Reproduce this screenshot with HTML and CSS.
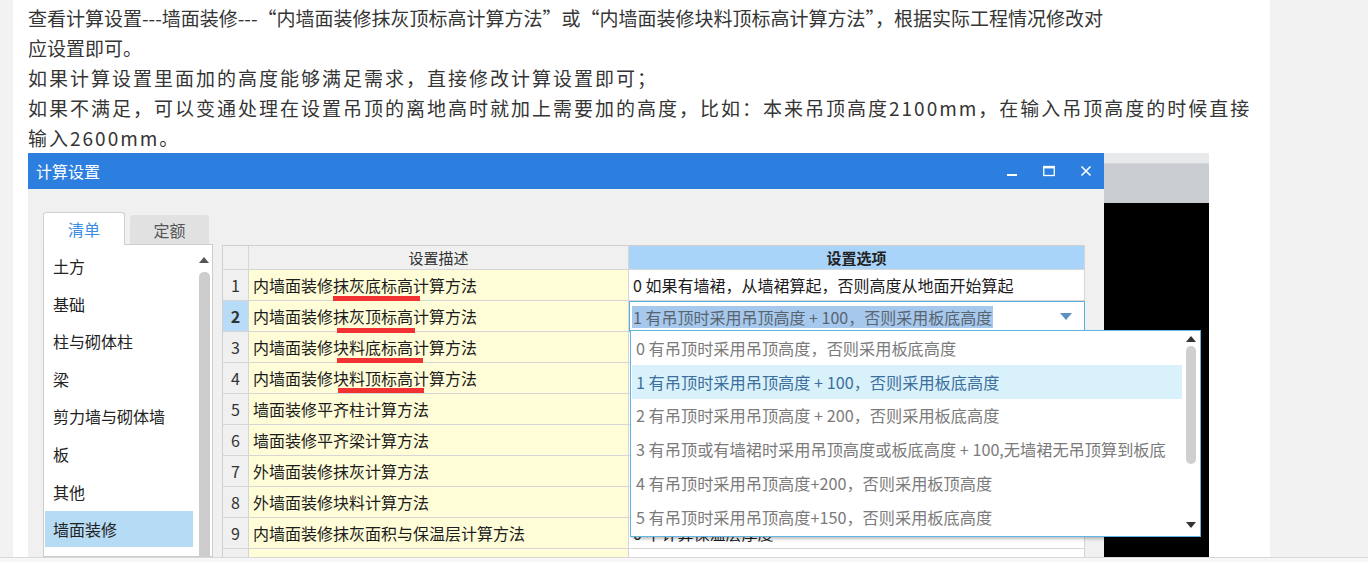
FILE: index.html
```html
<!DOCTYPE html>
<html lang="zh-CN">
<head>
<meta charset="utf-8">
<title>计算设置</title>
<link rel="stylesheet" href="styles.css">
</head>
<body>
<div class="page">
  <div class="article">
    <p class="line">查看计算设置---墙面装修---“内墙面装修抹灰顶标高计算方法”或“内墙面装修块料顶标高计算方法”，根据实际工程情况修改对</p>
    <p class="line">应设置即可。</p>
    <p class="line wide">如果计算设置里面加的高度能够满足需求，直接修改计算设置即可；</p>
    <p class="line wide">如果不满足，可以变通处理在设置吊顶的离地高时就加上需要加的高度，比如：本来吊顶高度2100mm，在输入吊顶高度的时候直接</p>
    <p class="line wide">输入2600mm。</p>

    <div class="figure">
      <div class="dialog">
        <div class="titlebar">
          <span class="title">计算设置</span>
          <div class="controls">
            <span class="ctl"><svg width="12" height="12" viewBox="0 0 12 12"><rect x="1" y="9" width="10" height="2" fill="#fff"/></svg></span>
            <span class="ctl"><svg width="12" height="12" viewBox="0 0 12 12"><rect x="0.75" y="1.5" width="10.5" height="9" fill="none" stroke="#fff" stroke-width="1.3"/><rect x="0.5" y="1" width="11" height="2.4" fill="#fff"/></svg></span>
            <span class="ctl"><svg width="12" height="12" viewBox="0 0 12 12"><path d="M1.5 1.5 L10.5 10.5 M10.5 1.5 L1.5 10.5" stroke="#fff" stroke-width="1.6"/></svg></span>
          </div>
        </div>
        <div class="dlg-body">
          <div class="tabs">
            <div class="tab active">清单</div>
            <div class="tab">定额</div>
          </div>
          <div class="content">
            <div class="catlist">
              <div class="cat-items">
                <div class="cat">土方</div>
                <div class="cat">基础</div>
                <div class="cat">柱与砌体柱</div>
                <div class="cat">梁</div>
                <div class="cat">剪力墙与砌体墙</div>
                <div class="cat">板</div>
                <div class="cat">其他</div>
                <div class="cat sel">墙面装修</div>
              </div>
              <div class="vbar">
                <svg class="arrow-up" width="10" height="6" viewBox="0 0 10 6"><path d="M0 6 L5 0 L10 6 Z" fill="#555"/></svg>
                <div class="thumb"></div>
              </div>
            </div>

            <div class="grid-wrap">
              <div class="grid">
                <div class="h num"></div>
                <div class="h desc">设置描述</div>
                <div class="h opt">设置选项</div>

                <div class="num">1</div>
                <div class="desc">内墙面装修抹灰底标高计算方法</div>
                <div class="opt">0 如果有墙裙，从墙裙算起，否则高度从地面开始算起</div>

                <div class="num cur">2</div>
                <div class="desc">内墙面装修抹灰顶标高计算方法</div>
                <div class="opt editor"><span class="selected-text">1 有吊顶时采用吊顶高度 + 100，否则采用板底高度</span><svg class="caret" width="12" height="7" viewBox="0 0 12 7"><path d="M0 0 L12 0 L6 7 Z" fill="#5d8fc2"/></svg></div>

                <div class="num">3</div>
                <div class="desc">内墙面装修块料底标高计算方法</div>
                <div class="opt"></div>

                <div class="num">4</div>
                <div class="desc">内墙面装修块料顶标高计算方法</div>
                <div class="opt"></div>

                <div class="num">5</div>
                <div class="desc">墙面装修平齐柱计算方法</div>
                <div class="opt"></div>

                <div class="num">6</div>
                <div class="desc">墙面装修平齐梁计算方法</div>
                <div class="opt"></div>

                <div class="num">7</div>
                <div class="desc">外墙面装修抹灰计算方法</div>
                <div class="opt"></div>

                <div class="num">8</div>
                <div class="desc">外墙面装修块料计算方法</div>
                <div class="opt"></div>

                <div class="num">9</div>
                <div class="desc">内墙面装修抹灰面积与保温层计算方法</div>
                <div class="opt">0 不计算保温层厚度</div>

                <div class="num">10</div>
                <div class="desc">内墙面装修块料面积与保温层计算方法</div>
                <div class="opt">0 不计算保温层厚度</div>
              </div>

              <span class="mark m1"></span>
              <span class="mark m2"></span>
              <span class="mark m3"></span>
              <span class="mark m4"></span>

              <div class="dropdown">
                <div class="dd-list">
                  <div class="dd-item">0 有吊顶时采用吊顶高度，否则采用板底高度</div>
                  <div class="dd-item hl">1 有吊顶时采用吊顶高度 + 100，否则采用板底高度</div>
                  <div class="dd-item">2 有吊顶时采用吊顶高度 + 200，否则采用板底高度</div>
                  <div class="dd-item">3 有吊顶或有墙裙时采用吊顶高度或板底高度 + 100,无墙裙无吊顶算到板底</div>
                  <div class="dd-item">4 有吊顶时采用吊顶高度+200，否则采用板顶高度</div>
                  <div class="dd-item">5 有吊顶时采用吊顶高度+150，否则采用板底高度</div>
                </div>
                <div class="dd-bar">
                  <svg width="10" height="6" viewBox="0 0 10 6"><path d="M0 6 L5 0 L10 6 Z" fill="#333"/></svg>
                  <div class="dd-thumb"></div>
                  <svg class="dd-down" width="10" height="6" viewBox="0 0 10 6"><path d="M0 0 L10 0 L5 6 Z" fill="#333"/></svg>
                </div>
              </div>
            </div>
          </div>
        </div>
      </div>
      <div class="backapp">
        <div class="ba-top"></div>
        <div class="ba-bar"></div>
        <div class="ba-canvas"></div>
      </div>
    </div>
  </div>
</div>
<div class="footer"></div>
</body>
</html>
```

FILE: styles.css
```css
* { box-sizing: border-box; }

body {
  margin: 0;
  background: #f2f2f2;
  font-family: "Noto Sans CJK SC", "Microsoft YaHei", sans-serif;
  overflow: hidden;
}

.page {
  margin-left: 13px;
  width: 1257px;
  height: 557px;
  background: #fff;
  padding: 3px 0 0 15px;
  overflow: hidden;
}

.footer {
  height: 5px;
  border-top: 1px solid #d8d8d8;
  background: #f7f7f7;
}

.line {
  margin: 0;
  font-size: 19px;
  line-height: 30px;
  color: #353535;
  white-space: nowrap;
}

.line.wide { letter-spacing: 2px; }

/* ---------- figure (screenshot of the app) ---------- */
.figure {
  display: flex;
  width: 1181px;
  height: 404px;
  overflow: hidden;
}

.dialog {
  width: 1076px;
  display: flex;
  flex-direction: column;
  background: #f0f0f0;
}

.titlebar {
  height: 36px;
  flex: none;
  background: #2c7fde;
  display: flex;
  align-items: center;
  padding-left: 8px;
  color: #fff;
  font-size: 16px;
}

.controls {
  margin-left: auto;
  display: flex;
}

.ctl {
  width: 37px;
  height: 36px;
  display: flex;
  align-items: center;
  justify-content: center;
}

.dlg-body {
  flex: 1;
  min-height: 0;
  display: flex;
  flex-direction: column;
  padding: 22px 19px 0 15px;
}

.tabs {
  display: flex;
  align-items: flex-end;
  height: 33px;
  flex: none;
}

.tab {
  width: 79px;
  height: 29px;
  margin-left: 5px;
  background: #e1e1e1;
  border-radius: 3px 3px 0 0;
  color: #555;
  font-size: 16px;
  display: flex;
  align-items: center;
  justify-content: center;
}

.tab.active {
  width: 82px;
  height: 33px;
  margin-left: 0;
  background: #fff;
  border: 1px solid #cfcfcf;
  border-bottom: none;
  color: #3a8ee6;
  position: relative;
  z-index: 1;
  margin-bottom: -1px;
}

.content {
  flex: 1;
  min-height: 0;
  display: flex;
  gap: 9px;
}

/* ---------- category list ---------- */
.catlist {
  width: 170px;
  background: #fff;
  border: 1px solid #cdcdcd;
  display: flex;
}

.cat-items {
  flex: 1;
  padding: 3px 0 0 1px;
  display: flex;
  flex-direction: column;
  gap: 1.6px;
}

.cat {
  height: 36px;
  padding-left: 8px;
  display: flex;
  align-items: center;
  font-size: 16px;
  color: #222;
  width: 148px;
}

.cat.sel { background: #b6dbf5; }

.vbar {
  width: 16px;
  display: flex;
  flex-direction: column;
  align-items: center;
  padding-top: 12px;
}

.thumb {
  margin-top: 9px;
  width: 11px;
  flex: 1;
  background: #cdcdcd;
  border-radius: 5px 5px 0 0;
}

/* ---------- settings grid ---------- */
.grid-wrap {
  position: relative;
  width: 863px;
  margin-top: 1px;
}

.grid {
  display: grid;
  grid-template-columns: 27px 380px 456px;
  grid-template-rows: 24px;
  grid-auto-rows: 31px;
  border-top: 1px solid #cfcfcf;
  font-size: 16px;
  color: #1c1c1c;
}

.grid > div {
  border-right: 1px solid #d6d6d6;
  border-bottom: 1px solid #d6d6d6;
  display: flex;
  align-items: center;
  white-space: nowrap;
  overflow: hidden;
}

.grid .num {
  justify-content: center;
  background: #f0f0f0;
  border-left: 1px solid #cfcfcf;
  color: #333;
  font-size: 16px;
}

.grid .num.cur {
  background: #b8dbf7;
  font-weight: bold;
}

.grid .desc {
  background: #fffdd8;
  padding-left: 4px;
}

.grid .opt {
  background: #fff;
  padding-left: 4px;
}

.grid .h {
  background: #f0f0f0;
  justify-content: center;
  font-size: 15px;
  color: #333;
  padding: 0;
}

.grid .h.opt {
  background: #a9d4f9;
  font-weight: bold;
  color: #222;
}

.grid .editor {
  border: 1px solid #59b0dc;
  padding-left: 2px;
  padding-right: 12px;
}

.selected-text {
  background: #a6c8ed;
  color: #5a6470;
  line-height: 22px;
  padding: 0 1px;
}

.caret { margin-left: auto; }

.mark {
  position: absolute;
  height: 5px;
  background: #f23232;
}
.m1 { left: 111px; width: 87px; top: 51px; }
.m2 { left: 115px; width: 78px; top: 83px; }
.m3 { left: 115px; width: 86px; top: 113px; }
.m4 { left: 116px; width: 86px; top: 143px; }

/* ---------- dropdown ---------- */
.dropdown {
  position: absolute;
  left: 408px;
  top: 85px;
  width: 571px;
  height: 207px;
  background: #fff;
  border: 1px solid #62b6df;
  box-shadow: 2px 2px 3px rgba(0, 0, 0, 0.25);
  display: flex;
  padding: 0 1px 0 1px;
}

.dd-list {
  flex: 1;
  display: flex;
  flex-direction: column;
}

.dd-item {
  height: 33.8px;
  padding-left: 4px;
  display: flex;
  align-items: center;
  font-size: 16.2px;
  color: #7b7b7b;
  white-space: nowrap;
}

.dd-item.hl {
  background: #d9f1fb;
  color: #3c6f9c;
}

.dd-bar {
  width: 17px;
  display: flex;
  flex-direction: column;
  align-items: center;
  padding: 5px 0 8px;
}

.dd-thumb {
  margin-top: 4px;
  width: 10px;
  height: 118px;
  background: #cfcfcf;
  border-radius: 5px;
}

.dd-down { margin-top: auto; }

/* ---------- app behind dialog ---------- */
.backapp {
  width: 105px;
  display: flex;
  flex-direction: column;
}

.ba-top {
  height: 11px;
  background: #e8e9ea;
  border-bottom: 1px solid #d4d6d8;
}

.ba-bar {
  height: 39px;
  background: #c9ccd0;
}

.ba-canvas {
  flex: 1;
  background: #000;
}
```
